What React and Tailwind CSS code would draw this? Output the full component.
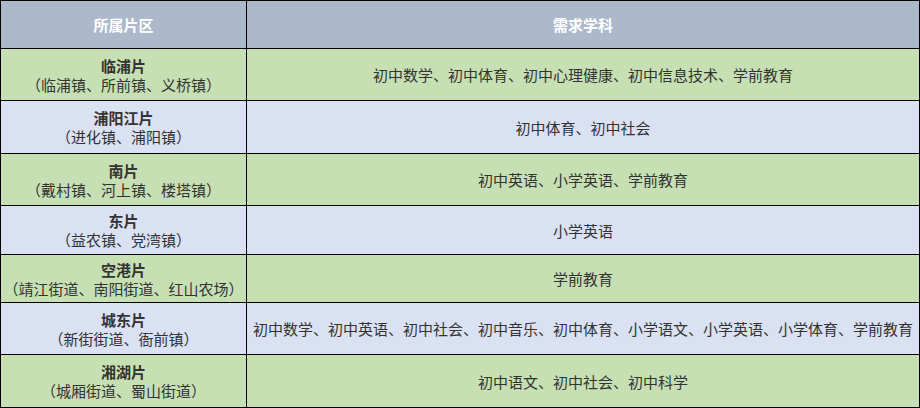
import React from 'react';

const rows = [
  { name: '临浦片', towns: '（临浦镇、所前镇、义桥镇）', subjects: '初中数学、初中体育、初中心理健康、初中信息技术、学前教育', h: 'h-[52px]', bg: 'bg-[#c6e0b4]' },
  { name: '浦阳江片', towns: '（进化镇、浦阳镇）', subjects: '初中体育、初中社会', h: 'h-[53px]', bg: 'bg-[#d9e1f2]' },
  { name: '南片', towns: '（戴村镇、河上镇、楼塔镇）', subjects: '初中英语、小学英语、学前教育', h: 'h-[52px]', bg: 'bg-[#c6e0b4]' },
  { name: '东片', towns: '（益农镇、党湾镇）', subjects: '小学英语', h: 'h-[49px]', bg: 'bg-[#d9e1f2]' },
  { name: '空港片', towns: '（靖江街道、南阳街道、红山农场）', subjects: '学前教育', h: 'h-[48px]', bg: 'bg-[#c6e0b4]' },
  { name: '城东片', towns: '（新街街道、衙前镇）', subjects: '初中数学、初中英语、初中社会、初中音乐、初中体育、小学语文、小学英语、小学体育、学前教育', h: 'h-[52px]', bg: 'bg-[#d9e1f2]' },
  { name: '湘湖片', towns: '（城厢街道、蜀山街道）', subjects: '初中语文、初中社会、初中科学', h: 'h-[53px]', bg: 'bg-[#c6e0b4]' },
];

export default function App(){
  return (
    <div className="w-[920px] h-[408px] border-t border-l border-black text-[15px] leading-[19px] text-[#333]" style={{ fontFamily: '"Noto Sans CJK SC", "Noto Sans", sans-serif' }}>
      <div className="flex h-[48px] bg-[#acb9ca] text-white font-bold">
        <div className="w-[246px] border-r border-b border-black flex items-center justify-center">所属片区</div>
        <div className="w-[673px] border-r border-b border-black flex items-center justify-center">需求学科</div>
      </div>
      {rows.map(r => (
        <div key={r.name} className={`flex ${r.h} ${r.bg}`}>
          <div className="w-[246px] border-r border-b border-black flex flex-col items-center justify-center">
            <div className="font-bold">{r.name}</div>
            <div>{r.towns}</div>
          </div>
          <div className="w-[673px] border-r border-b border-black flex items-center justify-center whitespace-nowrap">{r.subjects}</div>
        </div>
      ))}
    </div>
  );
}
